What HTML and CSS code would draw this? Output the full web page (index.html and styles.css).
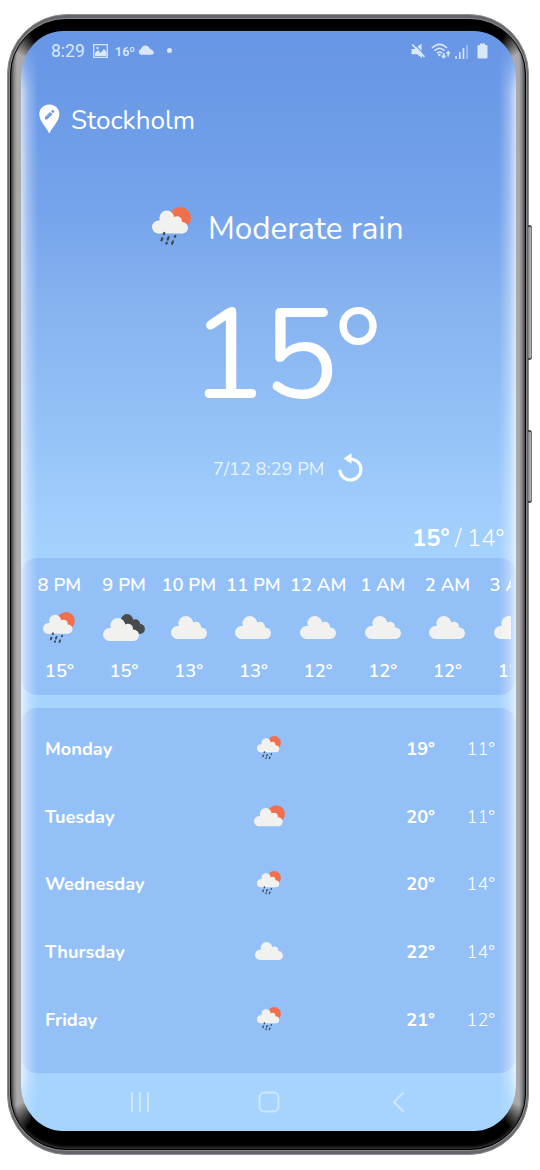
FILE: index.html
```html
<!DOCTYPE html>
<html lang="en">
<head>
<meta charset="utf-8">
<title>Weather</title>
<link rel="stylesheet" href="styles.css">
</head>
<body>
<svg class="defs" aria-hidden="true">
  <symbol id="cloud-shape" viewBox="0 0 36 23" overflow="visible">
    <g fill="#f1f1f0"><circle cx="14.8" cy="7.4" r="7.4"/><circle cx="25" cy="10.8" r="5"/><circle cx="30.3" cy="17.3" r="5.7"/><circle cx="6.5" cy="16.5" r="6.5"/><path d="M6.5 10H25l5.3 7V23H6.5z"/></g>
  </symbol>
  <symbol id="cloud" viewBox="0 0 36 23"><use href="#cloud-shape" width="36" height="23"/></symbol>
  <symbol id="partly" viewBox="0 -3.5 39 27">
    <circle cx="28" cy="7.4" r="10.9" fill="#f0704d"/><use href="#cloud-shape" width="36" height="23"/>
  </symbol>
  <symbol id="overcast" viewBox="0 -4 42 27">
    <g fill="#484a4c"><circle cx="24" cy="2.3" r="6.2"/><circle cx="32.5" cy="6" r="4.7"/><circle cx="37" cy="11" r="4.9"/><path d="M20 0h8l8 7v9h-6L20 8z"/></g><use href="#cloud-shape" width="36" height="23"/>
  </symbol>
  <symbol id="rain" viewBox="0 -3.5 39 39">
    <circle cx="28" cy="7.4" r="10.9" fill="#f0704d"/><use href="#cloud-shape" width="36" height="23"/>
    <g stroke="#414a55" stroke-width="2.3" stroke-linecap="round"><path d="M12.200 22.500l-.3 1M10.300 27.800l-.8 2.100M16.600 26.800l-.9 2.200M23.300 25.500l-.4.7M14.800 32.200l-.4.8M20.900 31l-.8 2.100"/></g>
  </symbol>
</svg>
<div class="phone">
  <i class="key volume"></i><i class="key power"></i>
  <div class="bezel">
    <main class="screen">
      <header class="status">
        <span class="clock">8:29</span>
        <svg class="photo" width="15" height="14" viewBox="0 0 15 14"><path fill="none" stroke="#dae6fa" stroke-width="1.3" d="M.7.7h13.6v12.6H.7z"/><path fill="#dae6fa" d="M2 12V9l3-3 2.5 3L11 5l2.5 3v4z"/><circle cx="4.5" cy="4" r="1.2" fill="#dae6fa"/></svg>
        <span class="status-temp">16º</span>
        <svg class="mini-cloud" width="16" height="10" viewBox="0 0 16 10"><path fill="#dae6fa" d="M3 9.700a3 3 0 0 1 0-5.800C3.800 1.500 5.300.4 7.400.4c2 0 3.500 1.100 4.200 3 .9.1 1.700.7 2 1.500C15 5.200 15.800 6.300 15.800 7.400c0 1.300-1 2.300-2.400 2.300z"/></svg>
        <i class="dot"></i>
        <svg class="mute" width="15" height="16" viewBox="0 0 15 16"><path fill="#dae6fa" d="M.5 6h3l2-2 5.500 6V15L6 11.300H.5zM6.500 3.500L10.500.8v7z"/><path stroke="#dae6fa" stroke-width="1.700" d="M1.200 1.500l12.300 12.300"/></svg>
        <svg class="wifi" width="20" height="16" viewBox="0 0 20 16"><g fill="none" stroke="#dae6fa" stroke-width="1.600"><path d="M1 5q7.500-7.300 15 0M3.500 7.800q5-5 10 0M6 10.300q2.600-2.500 5 0"/><path d="M12.700 10v5M10.900 12.700l1.800 1.900 1.800-1.900M17.200 13.500v-5M15.500 10.500l1.700-1.900 1.700 1.900"/></g><circle cx="8.300" cy="12" r="1.300" fill="#dae6fa"/></svg>
        <svg class="signal" width="14" height="15" viewBox="0 0 14 15"><path fill="#dae6fa" d="M.3 12h1.600v3H.3zM4 8h1.600v7H4zM7.600 4h1.700v11H7.600z"/><path fill="#a2bff0" d="M11.300 1H13v14h-1.700z"/></svg>
        <svg class="battery" width="11" height="16" viewBox="0 0 11 16"><path fill="#dae6fa" d="M3 .5h5V2h1.500Q10.500 2 10.500 3v11.500q0 1-1 1h-8q-1 0-1-1V3q0-1 1-1H3z"/></svg>
      </header>
      <div class="place">
        <svg width="21" height="30" viewBox="0 0 21 30"><path fill="#fff" d="M10.300.4C4.500.4.300 4.700.300 10.300.300 16.500 6.500 22.500 10.300 29.500 14 22.500 20.400 16.500 20.400 10.300 20.400 4.700 16 .4 10.300.4z"/><path fill="#6f9de9" d="M6 15.600v-2.500l5.200-5.200 2.300 2.300-5.300 5.400zM12 7.200l1.300-1.200q.6-.4 1.200.2l.6.6q.5.600 0 1.200L13.900 9.300z"/></svg>
        <span class="city">Stockholm</span>
      </div>
      <div class="condition">
        <svg width="39" height="39"><use href="#rain"/></svg>
        <span class="condition-name">Moderate rain</span>
      </div>
      <div class="now">15°</div>
      <div class="updated">
        <span class="stamp">7/12 8:29 PM</span>
        <svg width="26" height="30" viewBox="0 0 26 30"><path fill="none" stroke="#fff" stroke-width="3.200" stroke-linecap="round" d="M2 18A10.500 10.500 0 1 0 12.500 6"/><path fill="#fff" d="M5.500 5.500L13.500.3v10.400z"/></svg>
      </div>
      <div class="range"><b>15°</b><span class="slash">/</span><span class="low">14°</span></div>
      <section class="hourly">
        <div class="hours">
          <div class="hour"><span>8 PM</span><svg width="32" height="32"><use href="#rain"/></svg><span>15°</span></div>
          <div class="hour"><span>9 PM</span><svg width="42" height="27"><use href="#overcast"/></svg><span>15°</span></div>
          <div class="hour"><span>10 PM</span><svg width="36" height="23"><use href="#cloud"/></svg><span>13°</span></div>
          <div class="hour"><span>11 PM</span><svg width="36" height="23"><use href="#cloud"/></svg><span>13°</span></div>
          <div class="hour"><span>12 AM</span><svg width="36" height="23"><use href="#cloud"/></svg><span>12°</span></div>
          <div class="hour"><span>1 AM</span><svg width="36" height="23"><use href="#cloud"/></svg><span>12°</span></div>
          <div class="hour"><span>2 AM</span><svg width="36" height="23"><use href="#cloud"/></svg><span>12°</span></div>
          <div class="hour"><span>3 AM</span><svg width="36" height="23"><use href="#cloud"/></svg><span>12°</span></div>
        </div>
      </section>
      <section class="daily">
        <div class="day"><b class="name">Monday</b><svg width="24" height="24"><use href="#rain"/></svg><b class="high">19°</b><span class="min">11°</span></div>
        <div class="day"><b class="name">Tuesday</b><svg width="31" height="22"><use href="#partly"/></svg><b class="high">20°</b><span class="min">11°</span></div>
        <div class="day"><b class="name">Wednesday</b><svg width="24" height="24"><use href="#rain"/></svg><b class="high">20°</b><span class="min">14°</span></div>
        <div class="day"><b class="name">Thursday</b><svg width="28" height="18"><use href="#cloud"/></svg><b class="high">22°</b><span class="min">14°</span></div>
        <div class="day"><b class="name">Friday</b><svg width="24" height="24"><use href="#rain"/></svg><b class="high">21°</b><span class="min">12°</span></div>
      </section>
      <nav class="nav">
        <svg width="20" height="22" viewBox="0 0 20 22"><path fill="none" stroke="#d0e6fc" stroke-width="2" stroke-linecap="round" d="M2 2v18M10 2v18M18 2v18"/></svg>
        <svg width="22" height="22" viewBox="0 0 22 22"><rect x="1.500" y="1.500" width="19" height="19" rx="5" fill="none" stroke="#d0e6fc" stroke-width="2"/></svg>
        <svg width="20" height="22" viewBox="0 0 20 22"><path fill="none" stroke="#d0e6fc" stroke-width="2" d="M15.500 1.500L6 11l9.500 9.500"/></svg>
      </nav>
    </main>
  </div>
</div>
</body>
</html>
```

FILE: styles.css
```css
* { box-sizing: border-box; }
body { margin: 0; width: 540px; height: 1170px; overflow: hidden; background: #fff; color: #fff; font-family: Nunito, Lato, sans-serif; white-space: nowrap; padding: 14px 11px 0 7px; }
.defs { display: block; width: 0; height: 0; }
svg { display: block; flex: none; }
.phone { position: relative; width: 522px; height: 1141px; border-radius: 60px; padding: 4px 2px; border: 1px solid #8e8e92; background: linear-gradient(90deg, transparent 59px, transparent 0) , #65656a; }
.key { position: absolute; right: -4px; width: 4px; border-radius: 0 3px 3px 0; background: linear-gradient(90deg, #77777b, #b5b5ba 60%, #555); border-top: 2px solid #444; border-bottom: 2px solid #444; }
.volume { top: 210px; height: 135px; }
.power { top: 415px; height: 73px; }
.bezel {
  height: 100%; border-radius: 56px; border: 1px solid #000; padding: 11px 9px 18px 10px;
  background:
    conic-gradient(from 270deg at 42px 54px, transparent 30deg, #000 62deg, #000 90deg, transparent 90deg) 0 0 / 42px 54px no-repeat,
    conic-gradient(from 0deg at 0 54px, #000 28deg, transparent 60deg, transparent 90deg) 100% 0 / 42px 54px no-repeat,
    conic-gradient(from 180deg at 42px 0, #000 32deg, transparent 64deg, transparent 90deg) 0 100% / 42px 62px no-repeat,
    conic-gradient(from 90deg at 0 0, transparent 26deg, #000 58deg, #000 90deg) 100% 100% / 42px 62px no-repeat,
    linear-gradient(#000, #000) 50% 0 / calc(100% - 84px) 100% no-repeat,
    linear-gradient(90deg, #444 0, #858585 3px, #aaa 6px, #aaa calc(100% - 6px), #858585 calc(100% - 3px), #555 100%);
  box-shadow: 0 0 0 1px #88888c, inset 0 -2px 3px #333;
}
.screen { position: relative; width: 495px; height: 1100px; border-radius: 42px / 46px; overflow: hidden; background: linear-gradient(#6896e6 0, #6a99e7 60px, #76a4ec 180px, #86b2ef 270px, #93c1f7 390px, #9fccfb 470px, #a6d4ff 550px); }
.screen::after { content: ""; position: absolute; inset: 0; background: linear-gradient(90deg, rgba(255,255,255,.68), rgba(255,255,255,.3) 7px, transparent 17px, transparent calc(100% - 17px), rgba(255,255,255,.3) calc(100% - 7px), rgba(255,255,255,.68)); -webkit-mask: linear-gradient(transparent 12px, #000 60px, #000 calc(100% - 55px), transparent); mask: linear-gradient(transparent 12px, #000 60px, #000 calc(100% - 55px), transparent); pointer-events: none; }
.status { display: flex; align-items: center; height: 40px; padding: 0 28px 0 30px; color: #dae6fa; font-family: Roboto, sans-serif; }
.clock { font-size: 17.5px; width: 42px; }
.status-temp { font-size: 12.5px; font-weight: 600; margin-left: 7px; width: 23px; }
.mini-cloud { margin-top: -2px; }
.dot { width: 5px; height: 5px; border-radius: 50%; background: #dae6fa; margin-left: 13px; margin-top: -2px; }
.mute { margin-left: auto; }
.wifi { margin-left: 5px; }
.signal { margin-left: 4px; }
.battery { margin-left: 8px; }
.place { display: flex; align-items: center; height: 98px; padding-left: 18px; }
.place svg { margin-top: -3px; }
.city { font-size: 26.1px; margin-left: 11px; }
.condition { display: flex; align-items: center; height: 117px; padding-left: 131px; }
.condition svg { margin-top: -2px; }
.condition-name { font-size: 31.4px; margin: 1px 0 0 17px; }
.now { height: 138px; line-height: 142px; padding-left: 169px; font-size: 126px; letter-spacing: -3.2px; font-weight: 430; }
.updated { display: flex; align-items: center; height: 90px; padding-left: 192px; }
.updated svg { margin-top: -2px; }
.stamp { font-size: 18.2px; color: #e8f3fe; width: 125px; }
.range { display: flex; align-items: center; height: 44px; padding: 3px 0 0 391px; font-size: 23.8px; }
.slash { margin: 0 5.5px; font-weight: 300; }
.low { font-weight: 300; }
.hourly { height: 137px; width: 495px; background: #94c0f8; border-radius: 16px; padding: 0 5px 0 6px; font-size: 18.4px; font-weight: 640; }
.hours { display: flex; overflow: hidden; }
.hour { flex: 0 0 64.7px; display: grid; grid-template-rows: 53px 33px 53px; justify-items: center; align-items: center; }
.daily { margin-top: 13px; height: 365px; width: 495px; padding: 7px 21px 0 24px; background: #94c0f8; border-radius: 16px; font-size: 18.2px; }
.day { display: grid; grid-template-columns: 194px 60px 136px 1fr; align-items: center; height: 67.8px; }
.day svg { justify-self: center; margin-top: -2px; }
.day b { font-weight: 670; }
.high { justify-self: end; }
.min { justify-self: end; font-weight: 300; }
.nav { display: flex; justify-content: space-between; align-items: center; height: 58px; padding: 0 108px 0 109px; }
```
